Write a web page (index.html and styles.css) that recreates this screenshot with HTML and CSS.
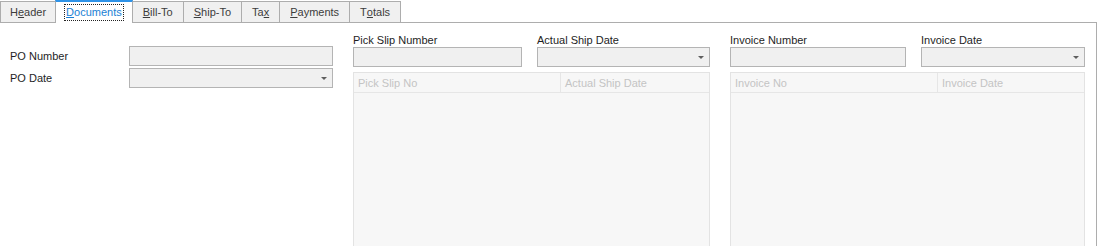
FILE: index.html
```html
<!DOCTYPE html>
<html lang="en">

<head>
    <meta charset="UTF-8">
    <title>Order - Documents</title>
    <link rel="stylesheet" href="styles.css">
</head>

<body>

    <div class="tabs">
        <div class="tab">H<u>e</u>ader</div>
        <div class="tab active"><span class="focus"><u>D</u>ocuments</span></div>
        <div class="tab"><u>B</u>ill-To</div>
        <div class="tab"><u>S</u>hip-To</div>
        <div class="tab">Ta<u>x</u></div>
        <div class="tab"><u>P</u>ayments</div>
        <div class="tab">T<u>o</u>tals</div>
    </div>

    <div class="page">
        <div class="po">
            <div class="row">
                <label>PO Number</label>
                <div class="box"></div>
            </div>
            <div class="row">
                <label>PO Date</label>
                <div class="box combo"></div>
            </div>
        </div>

        <div class="docs">
            <div class="fields">
                <div class="field pick-no">
                    <label>Pick Slip Number</label>
                    <div class="box"></div>
                </div>
                <div class="field pick-date">
                    <label>Actual Ship Date</label>
                    <div class="box combo"></div>
                </div>
            </div>
            <div class="grid">
                <div class="grid-head">
                    <div class="col">Pick Slip No</div>
                    <div class="col">Actual Ship Date</div>
                </div>
            </div>
        </div>

        <div class="docs invoices">
            <div class="fields">
                <div class="field inv-no">
                    <label>Invoice Number</label>
                    <div class="box"></div>
                </div>
                <div class="field inv-date">
                    <label>Invoice Date</label>
                    <div class="box combo"></div>
                </div>
            </div>
            <div class="grid">
                <div class="grid-head">
                    <div class="col">Invoice No</div>
                    <div class="col">Invoice Date</div>
                </div>
            </div>
        </div>
    </div>

</body>

</html>
```

FILE: styles.css
```css
body {
    margin: 0;
    font-family: "Liberation Sans", Arial, sans-serif;
    font-size: 11px;
    color: #1e1e1e;
    background-color: #fff;
    overflow: hidden;
}

/* tab strip */
.tabs {
    display: flex;
    align-items: flex-end;
    height: 22px;
}

.tab {
    box-sizing: border-box;
    height: 21px;
    display: flex;
    align-items: center;
    padding: 0 10px;
    margin-left: -1px;
    border: 1px solid #adadad;
    border-bottom: none;
    background-color: #f0f0f0;
    color: #3c3c3c;
}

.tab:first-child {
    margin-left: 0;
    padding: 0 9px;
}

.tab.active {
    height: 23px;
    margin-bottom: -1px;
    position: relative;
    z-index: 1;
    border-top: 2px solid #2e93e8;
    background-color: #fff;
    color: #1a7fd4;
    padding: 0 9px;
}

.focus {
    outline: 1px dotted #222;
    padding: 1px 1px 2px;
}

/* page */
.page {
    box-sizing: border-box;
    display: flex;
    gap: 20px;
    height: 224px;
    padding-left: 10px;
    border-top: 1px solid #adadad;
    border-right: 1px solid #adadad;
}

.box {
    box-sizing: border-box;
    height: 20px;
    border: 1px solid #b4b4b4;
    background-color: #f0f0f0;
}

.combo {
    display: flex;
    justify-content: flex-end;
    align-items: center;
    padding-right: 5px;
}

.combo::after {
    content: '';
    border-left: 3px solid transparent;
    border-right: 3px solid transparent;
    border-top: 3px solid #5e5e5e;
}

.po {
    width: 323px;
    padding-top: 23px;
    display: flex;
    flex-direction: column;
    gap: 2px;
}

.row {
    display: flex;
    align-items: center;
}

.row label {
    width: 119px;
}

.row .box {
    flex: 1;
}

.docs {
    width: 357px;
    padding-top: 10px;
    display: flex;
    flex-direction: column;
}

.docs.invoices {
    width: 355px;
}

.fields {
    display: flex;
    gap: 15px;
}

.field label {
    display: block;
    line-height: 14px;
}

.pick-no { width: 169px; }
.pick-date { width: 173px; }
.inv-no { width: 176px; }
.inv-date { width: 164px; }

/* grids run on past the bottom of the window */
.grid {
    flex: 1;
    margin-top: 5px;
    margin-bottom: -2px;
    border: 1px solid #e3e3e3;
    background-color: #f7f7f7;
}

.grid-head {
    display: flex;
    height: 19px;
    border-bottom: 1px solid #e6e6e6;
    color: #c4c4c4;
}

.col {
    display: flex;
    align-items: center;
    padding-left: 4px;
}

.col:first-child {
    box-sizing: border-box;
    width: 207px;
    border-right: 1px solid #e6e6e6;
}
```
